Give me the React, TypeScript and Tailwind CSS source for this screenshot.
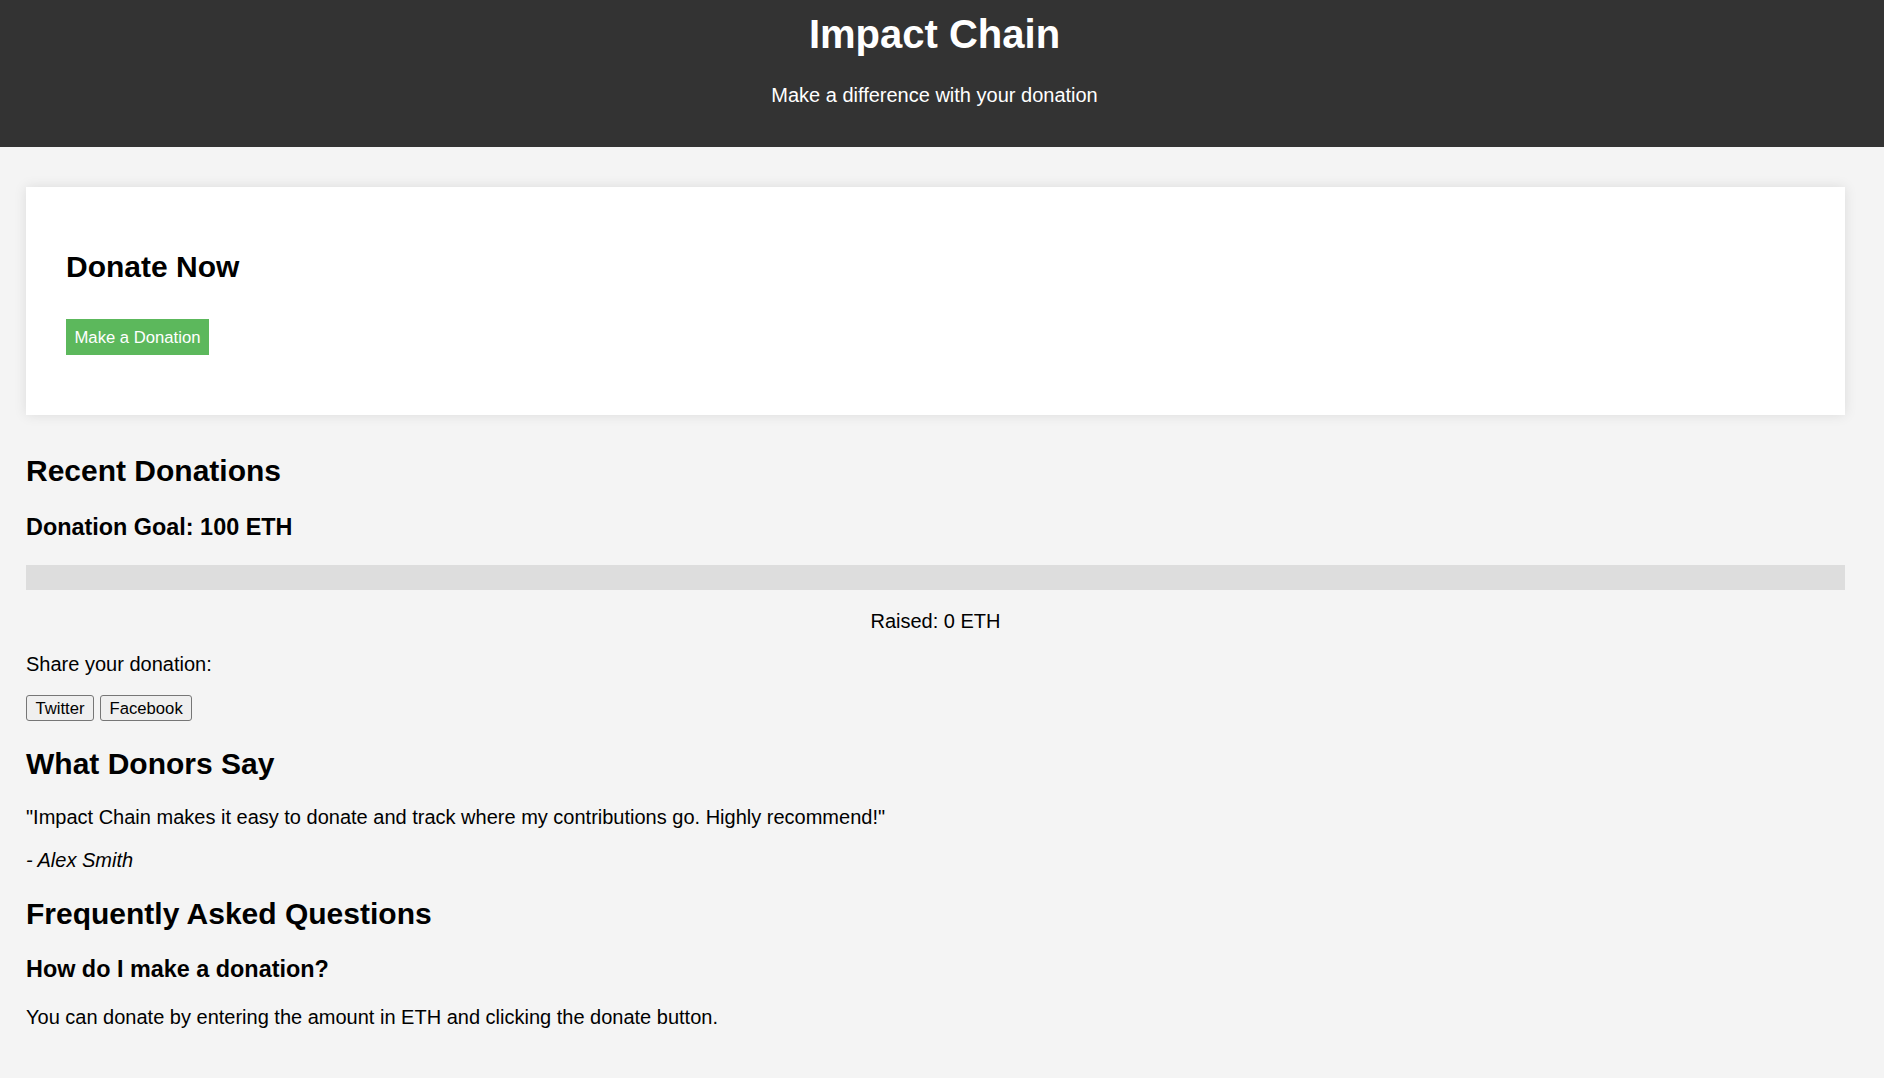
export default function App() {
  return (
    <div className="min-h-screen bg-[#f4f4f4] text-black font-['Liberation_Sans',Arial,sans-serif]">
      {/* Header */}
      <header className="bg-[#333] text-white pt-[11px] pb-[40px] pr-[15px] text-center">
        <h1 className="text-[40px] leading-[46px] font-bold mb-[27px]">Impact Chain</h1>
        <p className="text-[20px] leading-[23px]">Make a difference with your donation</p>
      </header>

      <main className="pl-[26px] pr-[39px] pt-[40px] pb-[44px]">
        {/* Donate card */}
        <section className="bg-white shadow-[0_0_12px_rgba(0,0,0,0.1)] pt-[63px] px-[40px] pb-[60px] mb-[39px]">
          <h2 className="text-[30px] leading-[34.5px] font-bold mb-[34.5px]">Donate Now</h2>
          <button className="h-[36px] px-[8.5px] bg-[#5cb85c] text-white text-[16.67px] leading-[19px]">
            Make a Donation
          </button>
        </section>

        {/* Recent donations */}
        <section>
          <h2 className="text-[30px] leading-[34.5px] font-bold mb-[25px]">Recent Donations</h2>
          <h3 className="text-[23.4px] leading-[27px] font-bold mb-[24.5px]">Donation Goal: 100 ETH</h3>
          <div className="h-[25px] bg-[#ddd] mb-[20px]" />
          <p className="text-[20px] leading-[23px] text-center mb-[20px]">Raised: 0 ETH</p>
          <p className="text-[20px] leading-[23px] mb-[19px]">Share your donation:</p>
          <div className="flex gap-[6px] mb-[25.5px]">
            <button className="h-[26px] px-[8.5px] bg-[#efefef] border border-[#767676] rounded-[3px] text-[16.67px] leading-[19px]">
              Twitter
            </button>
            <button className="h-[26px] px-[8.5px] bg-[#efefef] border border-[#767676] rounded-[3px] text-[16.67px] leading-[19px]">
              Facebook
            </button>
          </div>
        </section>

        {/* Testimonials */}
        <section>
          <h2 className="text-[30px] leading-[34.5px] font-bold mb-[25px]">What Donors Say</h2>
          <p className="text-[20px] leading-[23px] mb-[19.5px]">
            "Impact Chain makes it easy to donate and track where my contributions go. Highly recommend!"
          </p>
          <p className="text-[20px] leading-[23px] italic mb-[25px]">- Alex Smith</p>
        </section>

        {/* FAQ */}
        <section>
          <h2 className="text-[30px] leading-[34.5px] font-bold mb-[24.5px]">Frequently Asked Questions</h2>
          <h3 className="text-[23.4px] leading-[27px] font-bold mb-[23px]">How do I make a donation?</h3>
          <p className="text-[20px] leading-[23px]">
            You can donate by entering the amount in ETH and clicking the donate button.
          </p>
        </section>
      </main>
    </div>
  );
}
